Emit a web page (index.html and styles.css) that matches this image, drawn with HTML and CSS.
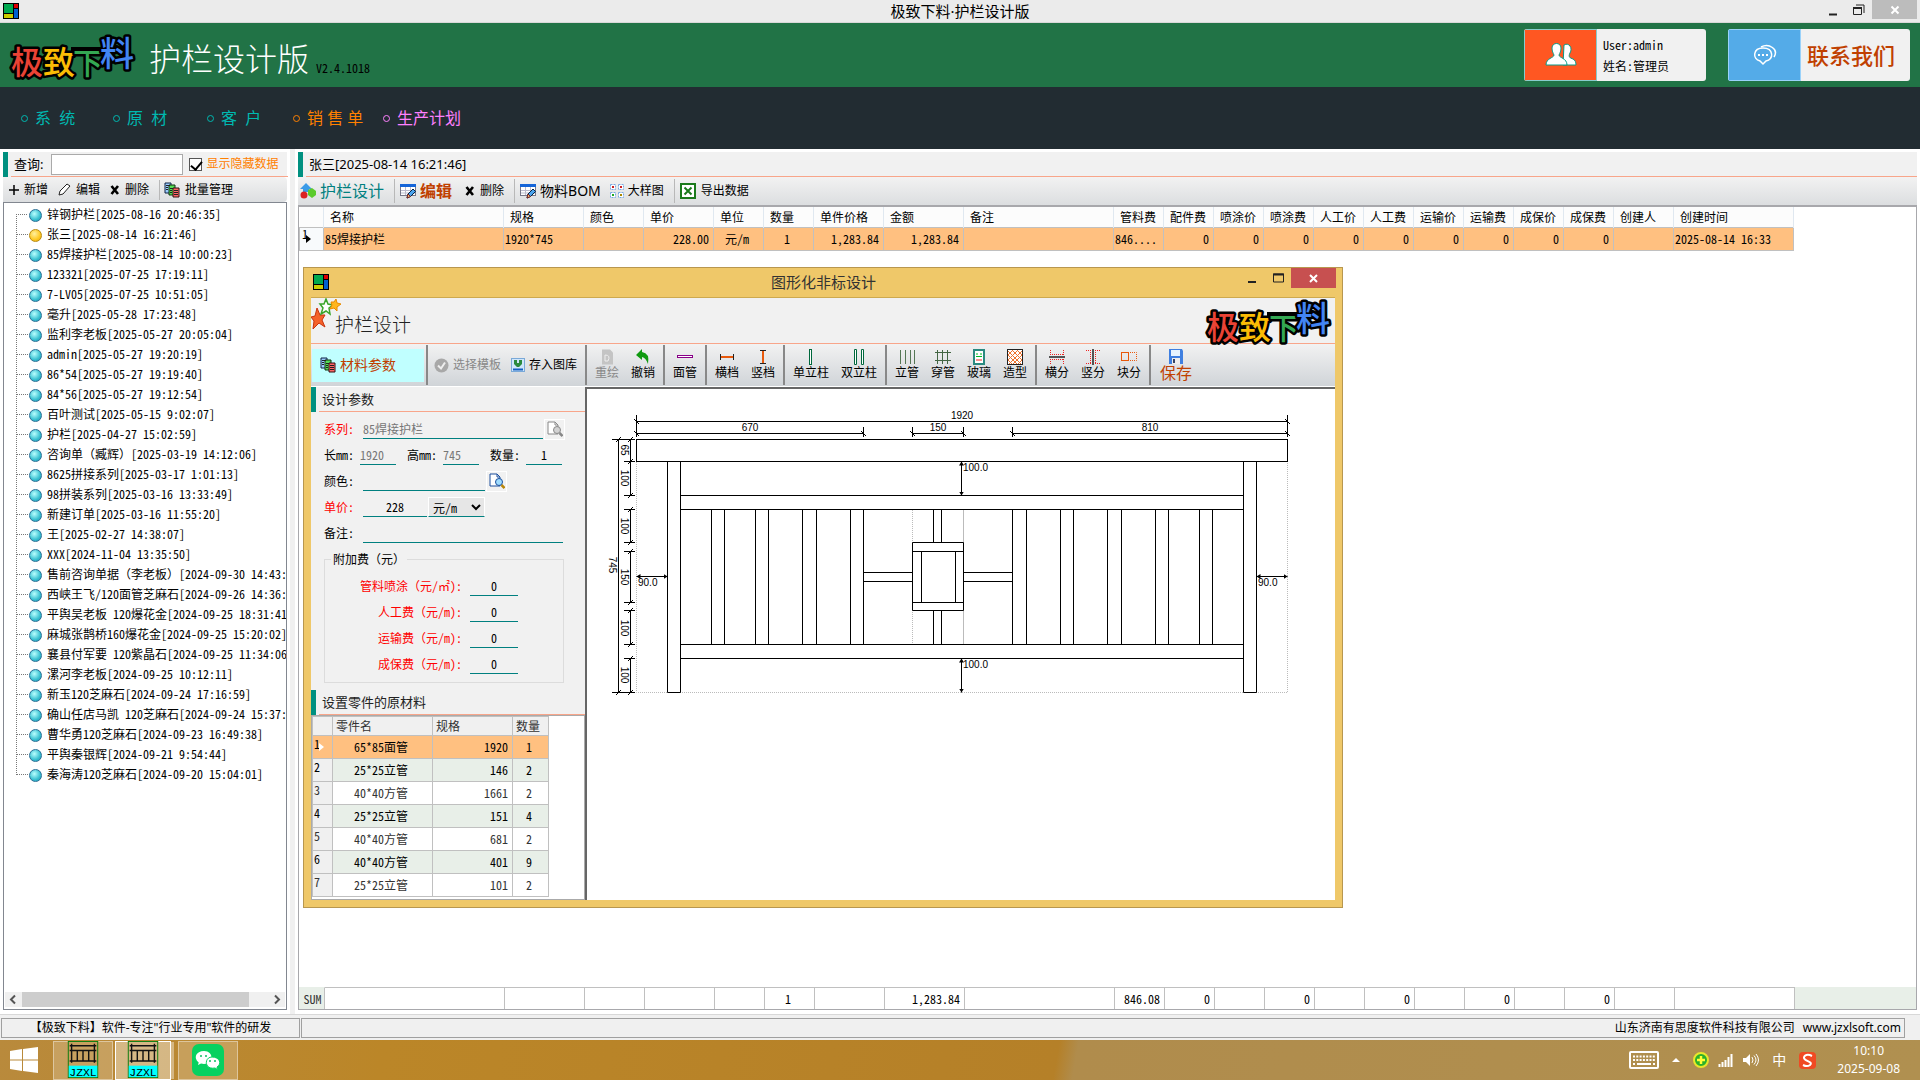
FILE: index.html
```html
<!DOCTYPE html>
<html lang="zh-CN">
<head>
    <meta charset="UTF-8">
    <meta name="viewport" content="width=device-width, initial-scale=1.0">
    <title>极致下料·护栏设计版</title>
    <link rel="stylesheet" href="styles.css">
</head>
<body>
    <svg class="defs" width="0" height="0">
        <symbol id="app" viewBox="0 0 16 16">
            <rect width="16" height="16" fill="#000"/>
            <rect x="1" y="1" width="9" height="9" fill="#00a84f"/>
            <rect x="11" y="1" width="4" height="4" fill="#d00"/>
            <rect x="11" y="6" width="4" height="9" fill="#0060d0"/>
            <rect x="1" y="11" width="9" height="4" fill="#cc0"/>
        </symbol>
        <symbol id="logo" viewBox="0 0 126 46" overflow="visible">
            <g font-family="Noto Sans CJK SC, sans-serif" font-weight="500" stroke="#000" stroke-width="5" stroke-linejoin="round" paint-order="stroke">
                <path d="M62 17H122" stroke-width="6"/>
                <text x="2" y="41" font-size="32" fill="#ea4335">极</text>
                <text x="34" y="41" font-size="32" fill="#fbbc05">致</text>
                <text x="64" y="41" font-size="30" fill="#34a853">下</text>
                <text x="91" y="33" font-size="34" fill="#4285f4">料</text>
            </g>
        </symbol>
        <symbol id="pages" viewBox="0 0 16 16">
            <path d="M1 1h6v10H1z" fill="#9cf" stroke="#124"/>
            <path d="M5 3h6v10H5z" fill="#5d5" stroke="#131"/>
            <path d="M9 6h6v9H9z" fill="#f66" stroke="#311"/>
            <path d="M2 3.500h4M2 5.500h2M2 7.500h2M6 6.500h3M6 8.500h2M6 10.500h2M10 8.500h4M10 10.500h4M10 12.500h4" stroke="#222"/>
        </symbol>
        <symbol id="formedit" viewBox="0 0 16 16">
            <rect x=".5" y="1.500" width="15" height="11" fill="#fff" stroke="#778"/>
            <rect y="1" width="16" height="3" fill="#1565d8"/>
            <path d="M1 7.500h14M1 10h14M5.500 4v8M10.500 4v8" stroke="#bbc"/>
            <path d="M7 15l1-4 5-5 2.500 2.500-5 5z" fill="#4aa3ee" stroke="#024"/>
            <path d="M7 15l1-4 2.500 2.500z" fill="#f7c27a" stroke="#722"/>
        </symbol>
        <symbol id="cross" viewBox="0 0 10 10">
            <path d="M1.500 1L8 9M8 1L1.500 9" stroke="#000" stroke-width="2.600"/>
        </symbol>
        <symbol id="find" viewBox="0 0 16 16">
            <path d="M1 1h7l3 3v9H1z" fill="#fff" stroke="currentColor"/>
            <path d="M8 1v3h3" fill="none" stroke="currentColor"/>
            <circle cx="10" cy="9" r="3.500" fill="#9fdcff" stroke="currentColor"/>
            <path d="M12.500 12l3 3" stroke="#b8860b" stroke-width="2.500"/>
        </symbol>
        <symbol id="fence" viewBox="0 0 32 40">
            <rect x=".5" y=".5" width="31" height="38" fill="none" stroke="#0a7a0a"/>
            <path d="M2 5h28M2 10h28M2 21h28M4 3v20M28 3v20M10 10v11M16 10v11M22 10v11" stroke="#111" stroke-width="1.500"/>
            <rect x="1" y="26" width="30" height="12" fill="#0ff"/>
            <text x="16" y="37" text-anchor="middle" font-family="Liberation Mono, monospace" font-size="12" fill="#000">JZXL</text>
        </symbol>
    </svg>

    <div class="titlebar">
        <svg class="icon16 title-icon"><use href="#app"/></svg>
        <span class="title-text">极致下料·护栏设计版</span>
        <div class="win-btns">
            <button aria-label="最小化"><svg width="10" height="14"><path d="M1 11.500h8" stroke="#222" stroke-width="2"/></svg></button>
            <button aria-label="还原"><svg width="12" height="12"><path d="M.5 3.500h8v7h-8zM3 1h8v8" fill="none" stroke="#222" stroke-width="1"/><path d="M0 4h9" stroke="#222" stroke-width="2"/></svg></button>
            <button class="close" aria-label="关闭"><svg width="10" height="10"><path d="M1.500 1.500l7 7M8.500 1.500l-7 7" stroke="#fff" stroke-width="2"/></svg></button>
        </div>
    </div>

    <header class="header">
        <svg class="logo"><use href="#logo"/></svg>
        <h1>护栏设计版</h1>
        <span class="version song">V2.4.1018</span>
        <div class="card user-card">
            <div class="card-icon orange">
                <svg width="32" height="26" viewBox="0 0 32 26"><path d="M19 3c5-3 9 3 6 8-2 4 0 5 3 6 2 1 3 3 3 6H18z" fill="#fff" stroke="#0a9a88"/><path d="M7 6c0-6 9-6 9 0 0 3-1 5-2 7 0 3 8 3 8 10H1c0-7 8-7 8-10-1-2-2-4-2-7z" fill="#fff" stroke="#0a9a88"/></svg>
            </div>
            <div class="card-text song"><span>User:admin</span><span>姓名:管理员</span></div>
        </div>
        <a href="#" class="card contact-card">
            <div class="card-icon blue">
                <svg width="24" height="22" viewBox="0 0 24 22"><path d="M10 4c11 0 11 12 3 13l-3 3-3-3C-1 15 0 4 10 4z" fill="none" stroke="#fff" stroke-width="1.500"/><path d="M8 3c8-4 18 2 13 10" fill="none" stroke="#fff" stroke-width="1.500"/><path d="M5 11h2M9 11h2M13 11h2" stroke="#fff" stroke-width="2"/></svg>
            </div>
            <span class="contact-text">联系我们</span>
        </a>
    </header>

    <nav class="nav">
        <a href="#"><i></i>系&nbsp;&nbsp;统</a>
        <a href="#"><i></i>原&nbsp;&nbsp;材</a>
        <a href="#"><i></i>客&nbsp;&nbsp;户</a>
        <a href="#" class="sale"><i></i>销 售 单</a>
        <a href="#" class="plan"><i></i>生产计划</a>
    </nav>

    <main class="main">
        <aside class="side">
            <div class="section">
                <div class="section-body">
                    <label for="query">查询:</label>
                    <input type="text" id="query" class="query">
                    <input type="checkbox" id="hidden-data" checked>
                    <label for="hidden-data" class="hidden-label">显示隐藏数据</label>
                </div>
            </div>
            <div class="toolbar side-toolbar">
                <button><svg width="10" height="10"><path d="M0 5h10M5 0v10" stroke="#000" stroke-width="1.500"/></svg>新增</button>
                <button><svg width="13" height="13"><path d="M1 12l1-4 7-7 3 2-7 8z" fill="#fff" stroke="#222"/></svg>编辑</button>
                <button><svg width="10" height="10"><use href="#cross"/></svg>删除</button>
                <span class="sep"></span>
                <button><svg class="icon16"><use href="#pages"/></svg>批量管理</button>
            </div>
            <div class="tree-box">
                <ul class="tree song">
                    <li>锌钢护栏[2025-08-16 20:46:35]</li>
                    <li class="current">张三[2025-08-14 16:21:46]</li>
                    <li>85焊接护栏[2025-08-14 10:00:23]</li>
                    <li>123321[2025-07-25 17:19:11]</li>
                    <li>7-LV05[2025-07-25 10:51:05]</li>
                    <li>毫升[2025-05-28 17:23:48]</li>
                    <li>监利李老板[2025-05-27 20:05:04]</li>
                    <li>admin[2025-05-27 19:20:19]</li>
                    <li>86*54[2025-05-27 19:19:40]</li>
                    <li>84*56[2025-05-27 19:12:54]</li>
                    <li>百叶测试[2025-05-15 9:02:07]</li>
                    <li>护栏[2025-04-27 15:02:59]</li>
                    <li>咨询单<span class="full">（臧辉）</span>[2025-03-19 14:12:06]</li>
                    <li>8625拼接系列[2025-03-17 1:01:13]</li>
                    <li>98拼装系列[2025-03-16 13:33:49]</li>
                    <li>新建订单[2025-03-16 11:55:20]</li>
                    <li>王[2025-02-27 14:38:07]</li>
                    <li>XXX[2024-11-04 13:35:50]</li>
                    <li>售前咨询单据<span class="full">（李老板）</span>[2024-09-30 14:43:</li>
                    <li>西峡王飞/120面管芝麻石[2024-09-26 14:36:</li>
                    <li>平舆吴老板 120爆花金[2024-09-25 18:31:41</li>
                    <li>麻城张鹊桥160爆花金[2024-09-25 15:20:02]</li>
                    <li>襄县付军要 120紫晶石[2024-09-25 11:34:06</li>
                    <li>漯河李老板[2024-09-25 10:12:11]</li>
                    <li>新玉120芝麻石[2024-09-24 17:16:59]</li>
                    <li>确山任店马凯 120芝麻石[2024-09-24 15:37:</li>
                    <li>曹华勇120芝麻石[2024-09-23 16:49:38]</li>
                    <li>平舆秦银辉[2024-09-21 9:54:44]</li>
                    <li>秦海涛120芝麻石[2024-09-20 15:04:01]</li>
                </ul>
                <div class="hscroll">
                    <svg width="17" height="15"><path d="M10 3.500l-4 4 4 4" fill="none" stroke="#555" stroke-width="2"/></svg>
                    <div class="thumb"></div>
                    <svg width="17" height="15"><path d="M7 3.500l4 4-4 4" fill="none" stroke="#555" stroke-width="2"/></svg>
                </div>
            </div>
        </aside>

        <div class="splitter"></div>

        <section class="content">
            <div class="section">
                <div class="section-body">张三[2025-08-14 16:21:46]</div>
            </div>
            <div class="toolbar main-toolbar">
                <button class="big teal"><svg class="icon16" viewBox="0 0 16 16"><path d="M6 0l6 6H9v3H3V6H0z" fill="#3a9be8"/><circle cx="4" cy="12" r="3.500" fill="#d22"/><path d="M8 7l4-2 4 3v4l-4 3-4-3z" fill="#5ccb2c"/></svg>护栏设计</button>
                <span class="sep"></span>
                <button class="big rust"><svg class="icon16"><use href="#formedit"/></svg>编辑</button>
                <button class="del"><svg width="10" height="10"><use href="#cross"/></svg>删除</button>
                <span class="sep"></span>
                <button class="mid"><svg class="icon16"><use href="#formedit"/></svg>物料BOM</button>
                <button class="sample"><svg width="14" height="14"><path d="M.5.5h5v5h-5zM8.500.5h5v5h-5zM.5 8.500h5v5h-5zM8.500 8.500h5v5h-5z" fill="#fff" stroke="#79a8e0" stroke-dasharray="2 1"/><path d="M2 3h2M10 3h2" stroke="#c22" stroke-width="2"/><path d="M2 11h2" stroke="#2a2" stroke-width="2"/><path d="M10 11h2" stroke="#a80" stroke-width="2"/></svg>大样图</button>
                <span class="sep"></span>
                <button><svg class="icon16" viewBox="0 0 16 16"><rect x="1" y="1" width="14" height="14" fill="#fff" stroke="#1b7a1b" stroke-width="2"/><path d="M4.500 4.500l7 7M11.500 4.500l-7 7" stroke="#1b7a1b" stroke-width="2"/></svg>导出数据</button>
            </div>
            <div class="grid-box">
                <table class="grid song">
                    <colgroup>
                        <col class="w24"><col class="w180"><col class="w80"><col class="w60"><col class="w70"><col class="w50"><col class="w50"><col class="w70"><col class="w80"><col class="w150">
                        <col class="w50"><col class="w50"><col class="w50"><col class="w50"><col class="w50"><col class="w50"><col class="w50"><col class="w50"><col class="w50"><col class="w50"><col class="w60"><col class="w120">
                    </colgroup>
                    <thead>
                        <tr><th></th><th>名称</th><th>规格</th><th>颜色</th><th>单价</th><th>单位</th><th>数量</th><th>单件价格</th><th>金额</th><th>备注</th><th>管料费</th><th>配件费</th><th>喷涂价</th><th>喷涂费</th><th>人工价</th><th>人工费</th><th>运输价</th><th>运输费</th><th>成保价</th><th>成保费</th><th>创建人</th><th>创建时间</th></tr>
                    </thead>
                    <tbody>
                        <tr><td class="rownum">1<b></b></td><td>85焊接护栏</td><td>1920*745</td><td></td><td class="r">228.00</td><td class="c">元/m</td><td class="c">1</td><td class="r">1,283.84</td><td class="r">1,283.84</td><td></td><td>846....</td><td class="r">0</td><td class="r">0</td><td class="r">0</td><td class="r">0</td><td class="r">0</td><td class="r">0</td><td class="r">0</td><td class="r">0</td><td class="r">0</td><td></td><td>2025-08-14 16:33</td></tr>
                    </tbody>
                </table>
                <div class="sum-bar">
                    <table class="grid sum song">
                        <colgroup>
                            <col class="w24"><col class="w180"><col class="w80"><col class="w60"><col class="w70"><col class="w50"><col class="w50"><col class="w70"><col class="w80"><col class="w150">
                            <col class="w50"><col class="w50"><col class="w50"><col class="w50"><col class="w50"><col class="w50"><col class="w50"><col class="w50"><col class="w50"><col class="w50"><col class="w60"><col class="w120">
                        </colgroup>
                        <tbody>
                            <tr><td class="sum-label">SUM</td><td></td><td></td><td></td><td></td><td></td><td class="c">1</td><td></td><td class="r">1,283.84</td><td></td><td class="r">846.08</td><td class="r">0</td><td></td><td class="r">0</td><td></td><td class="r">0</td><td></td><td class="r">0</td><td></td><td class="r">0</td><td></td><td></td></tr>
                        </tbody>
                    </table>
                </div>
            </div>
        </section>
    </main>

    <div class="statusbar">
        <div class="status-left">【极致下料】软件-专注"行业专用"软件的研发</div>
        <div class="status-right"><span>山东济南有思度软件科技有限公司</span><span>www.jzxlsoft.com</span></div>
    </div>

    <footer class="taskbar">
        <button class="start" aria-label="开始"><svg width="28" height="26" viewBox="0 0 28 26"><path d="M0 4l12-2v10.500H0zM13 2l15-2v12.500H13zM0 13.500h12V24L0 22zM13 13.500h15V26l-15-2z" fill="#fff"/></svg></button>
        <button class="task" aria-label="JZXL"><svg width="32" height="38"><use href="#fence"/></svg></button>
        <button class="task active" aria-label="JZXL 护栏设计"><svg width="32" height="38"><use href="#fence"/></svg></button>
        <button class="task" aria-label="微信"><svg width="32" height="32" viewBox="0 0 32 32"><rect width="32" height="32" rx="7" fill="#07d160"/><path d="M12 7c10 0 10 13 0 13-1 0-2 0-3-.4L6 21l.7-2.500C1 14 4 7 12 7z" fill="#fff"/><path d="M20 13c8 0 10 7 5 10l.5 2.500L23 24c-11 2-11-11-3-11z" fill="#fff" stroke="#07d160"/><circle cx="9" cy="12" r="1" fill="#07c160"/><circle cx="14" cy="12" r="1" fill="#07c160"/><circle cx="18" cy="17" r="1" fill="#07c160"/><circle cx="23" cy="17" r="1" fill="#07c160"/></svg></button>
        <div class="tray">
            <svg class="keyboard" width="30" height="20" viewBox="0 0 30 20"><rect x="1" y="2" width="28" height="16" rx="1" fill="none" stroke="#fff" stroke-width="2"/><path d="M4 6.500h22M4 10h22" stroke="#fff" stroke-width="2" stroke-dasharray="2 1.300"/><path d="M8 14h14M4 14h2M24 14h2" stroke="#fff" stroke-width="2"/></svg>
            <svg class="more" width="8" height="6"><path d="M0 5l4-4 4 4z" fill="#fff"/></svg>
            <svg width="16" height="16"><circle cx="8" cy="8" r="7" fill="#2bb02b" stroke="#e8e82a" stroke-width="2"/><path d="M8 4v8M4 8h8" stroke="#ff3" stroke-width="2.500"/></svg>
            <svg width="16" height="14"><path d="M1.500 14v-3M4.500 14V9M7.500 14V7M10.500 14V4M13.500 14V1" stroke="#fff" stroke-width="2"/></svg>
            <svg width="16" height="14" viewBox="0 0 16 14"><path d="M0 5h3l4-4v12L3 9H0z" fill="#fff"/><path d="M9 4q2 3 0 6M11 2.500q4 4.500 0 9M13 1q5 6 0 12" fill="none" stroke="#fff"/></svg>
            <span class="ime">中</span>
            <svg width="17" height="17"><rect width="17" height="17" rx="4" fill="#f04a23"/><path d="M13 4C7 1 3 5 6 7.500S14 10 11 13c-2 1.500-5 1-7 0" fill="none" stroke="#fff" stroke-width="2"/></svg>
            <div class="clock"><span>10:10</span><span>2025-09-08</span></div>
        </div>
    </footer>

    <!-- 图形化非标设计窗口 -->
    <div class="dialog" role="dialog" aria-label="图形化非标设计">
        <div class="dialog-title">
            <svg class="icon16 title-icon"><use href="#app"/></svg>
            <span class="title-text">图形化非标设计</span>
            <div class="win-btns">
                <button aria-label="最小化"><svg width="10" height="14"><path d="M1 11h8" stroke="#222" stroke-width="2"/></svg></button>
                <button aria-label="最大化"><svg width="11" height="10"><path d="M.5 1h10v8H.5z" fill="none" stroke="#222"/><path d="M0 1.500h11" stroke="#222" stroke-width="2"/></svg></button>
                <button class="close" aria-label="关闭"><svg width="9" height="9"><path d="M1 1l7 7M8 1L1 8" stroke="#fff" stroke-width="2"/></svg></button>
            </div>
        </div>
        <div class="dialog-body">
            <div class="dialog-head">
                <svg class="stars" width="30" height="32" viewBox="0 0 30 32"><path d="M6 10l3 7 5 0-3 5 3 7-6-4-6 6 1-8-3-4 4-1z" fill="#f5622a" stroke="#c8330c"/><path d="M15 1l2 5 5 1-4 3 1 6-4-3-5 3 2-6-3-4h4z" fill="#fff" stroke="#3aa52a" stroke-width="1.500"/><path d="M25 1l1 4 4 1-4 3v4l-3-3-4 1 2-4-1-3h3z" fill="#ffb61e" stroke="#e88a00"/></svg>
                <h2>护栏设计</h2>
                <svg class="logo"><use href="#logo"/></svg>
            </div>
            <div class="ribbon">
                <button class="params"><svg class="icon16"><use href="#pages"/></svg>材料参数</button>
                <span class="rsep"></span>
                <button class="flat" disabled><svg width="15" height="15"><circle cx="7.500" cy="7.500" r="7" fill="#a8a8a8"/><path d="M4 7.500l3 3 4-6" fill="none" stroke="#eee" stroke-width="2"/></svg>选择模板</button>
                <button class="flat"><svg width="14" height="14"><rect x=".5" y=".5" width="13" height="13" fill="#cfe6fb" stroke="#7aa9d8"/><path d="M3 2h3v3h2V2h3v4l-3 3H6L3 6z" fill="#2b8a3e"/><path d="M2 11.500h10" stroke="#1560c0" stroke-width="2"/></svg>存入图库</button>
                <span class="rsep"></span>
                <button class="tool" disabled><svg class="icon16"><path d="M4 .5h7l3 3v12H3V.5z" fill="#c4c4c4"/><path d="M6 6v6M6 6q6 0 3 6H6" fill="none" stroke="#eee"/></svg>重绘</button>
                <button class="tool"><svg class="icon16"><path d="M7 0v3q8 1 6 12-2-6-6-7v3L1 6z" fill="#109a10"/></svg>撤销</button>
                <span class="rsep"></span>
                <button class="tool"><svg class="icon16"><rect x=".5" y="6.500" width="15" height="2" fill="#fff" stroke="#808"/></svg>面管</button>
                <span class="rsep"></span>
                <button class="tool"><svg class="icon16"><path d="M1.500 5v6M14.500 5v6" stroke="#222"/><path d="M2 8h12" stroke="#e8590c" stroke-width="2"/></svg>横档</button>
                <button class="tool"><svg class="icon16"><path d="M5 1.500h6M5 14.500h6" stroke="#222"/><path d="M8 2v12" stroke="#e8590c" stroke-width="2"/></svg>竖档</button>
                <span class="rsep"></span>
                <button class="tool wide"><svg class="icon16"><rect x="6.500" y=".5" width="2" height="15" fill="#fff" stroke="#00683c"/></svg>单立柱</button>
                <button class="tool wide"><svg class="icon16"><path d="M3.500.5h2v15h-2zM10.500.5h2v15h-2z" fill="#fff" stroke="#00683c"/></svg>双立柱</button>
                <span class="rsep"></span>
                <button class="tool"><svg class="icon16"><path d="M1.500 1v14M6.500 1v14M11.500 1v14M15.500 1v14" stroke="#575"/></svg>立管</button>
                <button class="tool"><svg class="icon16"><path d="M2.500 1v14M7.500 1v14M12.500 1v14M0 3.500h16M0 11.500h16" stroke="#464"/></svg>穿管</button>
                <button class="tool"><svg class="icon16"><rect x="3" y="1" width="10" height="14" fill="#fff" stroke="#2a8a80" stroke-width="2"/><path d="M5 5h2M9 5h2M5 7.500h6" stroke="#0b2"/><path d="M5 11h6" stroke="#e22"/></svg>玻璃</button>
                <button class="tool"><svg class="icon16"><rect x=".5" y=".5" width="15" height="15" fill="#fff" stroke="#222"/><path d="M1 6l5-5M1 11L11 1M2 15L15 2M6 15l9-9M11 15l4-4M10 1l5 5M5 1l10 10M1 2l13 13M1 6l9 9M1 11l4 4" stroke="#f0742c"/></svg>造型</button>
                <span class="rsep"></span>
                <button class="tool"><svg class="icon16"><path d="M1.500 1v5M14.500 1v5M1 5.500h14M1 10.500h14M1.500 10v5M14.500 10v5" stroke="#e22" stroke-dasharray="1 1"/><path d="M0 8h16" stroke="#222" stroke-width="1.500"/></svg>横分</button>
                <button class="tool"><svg class="icon16"><path d="M1 1.500h5M1 14.500h5M5.500 1v14M10.500 1v14M10 1.500h5M10 14.500h5" stroke="#e22" stroke-dasharray="1 1"/><path d="M8 0v16" stroke="#222" stroke-width="1.500"/></svg>竖分</button>
                <button class="tool"><svg class="icon16"><rect x=".5" y="3.500" width="7" height="8" fill="none" stroke="#e8590c"/><path d="M9 3.500h6.500v8H9" fill="none" stroke="#e8590c" stroke-dasharray="1 1"/></svg>块分</button>
                <span class="rsep"></span>
                <button class="tool save"><svg class="icon16"><path d="M1 0h13l1 2v13H1z" fill="#3f7fe0"/><rect x="3" y="1" width="9" height="6" fill="#e8f4ff"/><rect x="4" y="9" width="8" height="6" fill="#eee"/><rect x="5" y="10" width="2" height="4" fill="#346"/></svg>保存</button>
            </div>
            <div class="work">
                <div class="form-side">
                    <div class="section"><div class="section-body">设计参数</div></div>
                    <form class="params-form song">
                        <div class="row"><label for="series" class="red lab">系列:</label><input id="series" class="line w180" value="85焊接护栏" disabled><button type="button" class="find off" aria-label="选择系列"><svg class="icon16"><use href="#find"/></svg></button></div>
                        <div class="row dims"><label for="len">长mm:</label><input id="len" class="line w36" value="1920" disabled><label for="hei">高mm:</label><input id="hei" class="line w36" value="745" disabled><label for="qty">数量:</label><input id="qty" class="line w36 mid-text" value="1"></div>
                        <div class="row"><label for="color" class="lab">颜色:</label><input id="color" class="line w122"><button type="button" class="find" aria-label="选择颜色"><svg class="icon16"><use href="#find"/></svg></button></div>
                        <div class="row"><label for="price" class="red lab">单价:</label><input id="price" class="line w64 mid-text" value="228"><select aria-label="单位"><option>元/m</option></select></div>
                        <div class="row"><label for="remark" class="lab">备注:</label><input id="remark" class="line w200"></div>
                        <fieldset>
                            <legend class="full">附加费（元）</legend>
                            <div class="fee"><label for="fee1">管料喷涂<span class="full">（</span>元/㎡）:</label><input id="fee1" class="line w48 mid-text" value="0"></div>
                            <div class="fee"><label for="fee2">人工费<span class="full">（</span>元/m）:</label><input id="fee2" class="line w48 mid-text" value="0"></div>
                            <div class="fee"><label for="fee3">运输费<span class="full">（</span>元/m）:</label><input id="fee3" class="line w48 mid-text" value="0"></div>
                            <div class="fee"><label for="fee4">成保费<span class="full">（</span>元/m）:</label><input id="fee4" class="line w48 mid-text" value="0"></div>
                        </fieldset>
                    </form>
                    <div class="section"><div class="section-body">设置零件的原材料</div></div>
                    <div class="parts-box">
                        <table class="parts song">
                            <colgroup><col class="w20"><col class="w100"><col class="w80"><col class="w36"></colgroup>
                            <thead><tr><th></th><th>零件名</th><th>规格</th><th>数量</th></tr></thead>
                            <tbody>
                                <tr class="selected"><td class="rownum">1<b></b></td><td class="c">65*85面管</td><td class="r">1920</td><td class="c">1</td></tr>
                                <tr class="even"><td class="rownum">2</td><td class="c">25*25立管</td><td class="r">146</td><td class="c">2</td></tr>
                                <tr><td class="rownum">3</td><td class="c">40*40方管</td><td class="r">1661</td><td class="c">2</td></tr>
                                <tr class="even"><td class="rownum">4</td><td class="c">25*25立管</td><td class="r">151</td><td class="c">4</td></tr>
                                <tr><td class="rownum">5</td><td class="c">40*40方管</td><td class="r">681</td><td class="c">2</td></tr>
                                <tr class="even"><td class="rownum">6</td><td class="c">40*40方管</td><td class="r">401</td><td class="c">9</td></tr>
                                <tr><td class="rownum">7</td><td class="c">25*25立管</td><td class="r">101</td><td class="c">2</td></tr>
                            </tbody>
                        </table>
                    </div>
                </div>
                <div class="canvas">
                    <svg class="drawing" width="748" height="320">
                        <defs>
                            <marker id="tick" viewBox="-3 -3 6 6" markerWidth="6" markerHeight="6" orient="auto"><path d="M-2.500-2.500l5 5" stroke="#000"/></marker>
                            <marker id="arrow" viewBox="-4 -3 8 6" markerWidth="8" markerHeight="6" orient="auto-start-reverse"><path d="M-4-2.500L0 0l-4 2.500z"/></marker>
                        </defs>
                        <g transform="translate(13 1)" fill="none" stroke="#000">
                            <!-- 辅助线 -->
                            <path d="M36.500 72V302.500H687.500V72M312.500 120V254" stroke="#bbb" stroke-dasharray="1 1"/>
                            <path d="M363.500 120V254" stroke="#bbb"/>
                            <!-- 面管、立柱、横档 -->
                            <rect x="36.500" y="49.500" width="651" height="22"/>
                            <path d="M67.500 71.500V302.500H80.500V71.500M643.500 71.500V302.500H656.500V71.500"/>
                            <path d="M80.500 105.500H643.500M80.500 119.500H643.500M80.500 254.500H643.500M80.500 268.500H643.500"/>
                            <!-- 立管 -->
                            <path d="M111.500 119.500v135M124.500 119.500v135M155.500 119.500v135M168.500 119.500v135M202.500 119.500v135M216.500 119.500v135M250.500 119.500v135M263.500 119.500v135"/>
                            <path d="M412.500 119.500v135M426.500 119.500v135M460.500 119.500v135M473.500 119.500v135M507.500 119.500v135M521.500 119.500v135M555.500 119.500v135M568.500 119.500v135M599.500 119.500v135M612.500 119.500v135"/>
                            <!-- 造型 -->
                            <path d="M333.500 119.500v33M341.500 119.500v33M333.500 220.500v34M341.500 220.500v34M263.500 182.500h49M263.500 191.500h49M363.500 182.500h49M363.500 191.500h49"/>
                            <path d="M312.500 152.500h51v68h-51zM312.500 161.500h51M312.500 212.500h51M321.500 161.500v51M355.500 161.500v51"/>
                            <!-- 尺寸线 -->
                            <path d="M36.500 25v22M687.500 25v22M263.500 37v10M312.500 37v10M363.500 37v10M412.500 37v10M12 49.500h23M12 302.500h23M24 71.500h11M24 105.500h11M24 119.500h11M24 152.500h11M24 161.500h11M24 212.500h11M24 220.500h11M24 254.500h11M24 268.500h11"/>
                            <g marker-start="url(#tick)" marker-end="url(#tick)">
                                <path d="M36.500 31.500H687.500"/>
                                <path d="M36.500 43.500H263.500"/><path d="M312.500 43.500H363.500"/><path d="M412.500 43.500H687.500"/>
                                <path d="M18.500 49.500V302.500"/><path d="M30.500 49.500V71.500"/><path d="M30.500 71.500V105.500"/><path d="M30.500 119.500V152.500"/><path d="M30.500 161.500V212.500"/><path d="M30.500 220.500V254.500"/><path d="M30.500 268.500V302.500"/>
                            </g>
                            <g marker-start="url(#arrow)" marker-end="url(#arrow)">
                                <path d="M361.500 71.500V105.500"/><path d="M361.500 268.500V302.500"/><path d="M36.500 186.500H67.500"/><path d="M656.500 186.500H687.500"/>
                            </g>
                        </g>
                        <g transform="translate(13 1)" class="dim-text">
                            <g text-anchor="middle">
                                <text x="362" y="29">1920</text><text x="150" y="41">670</text><text x="338" y="41">150</text><text x="550" y="41">810</text>
                                <text transform="translate(21 60) rotate(90)">65</text>
                                <text transform="translate(21 88) rotate(90)">100</text>
                                <text transform="translate(21 136) rotate(90)">100</text>
                                <text transform="translate(21 187) rotate(90)">150</text>
                                <text transform="translate(21 238) rotate(90)">100</text>
                                <text transform="translate(21 285) rotate(90)">100</text>
                                <text transform="translate(9 175) rotate(90)">745</text>
                            </g>
                            <text x="363" y="81">100.0</text><text x="363" y="278">100.0</text><text x="38" y="196">90.0</text><text x="658" y="196">90.0</text>
                        </g>
                    </svg>
                </div>
            </div>
        </div>
    </div>
</body>
</html>
```
FILE: styles.css
```css
:root {
    --green: #217346;
    --teal: #009080;
    --salmon: #f8a58a;
    --panel: #f1f1f1;
    --selected: #ffc080;
    --line: #c0c0c0;
    --rust: #c04000;
    --gold: #efc869;
}
* { box-sizing: border-box; }
body {
    margin: 0;
    height: 100vh;
    display: flex;
    flex-direction: column;
    overflow: hidden;
    background: #fff;
    color: #000;
    font-family: "Noto Sans", "Noto Sans CJK SC", sans-serif;
    font-size: 12px;
    line-height: 16px;
}
button, input, select { font: inherit; color: inherit; }
button { border: 0; padding: 0; background: none; }
a { text-decoration: none; color: inherit; }
svg { flex: none; display: block; }
.defs { position: absolute; }
.icon16 { width: 16px; height: 16px; }
/* half-width latin, every ascii character is half of a han one */
.song { font-family: "Noto Sans CJK SC", sans-serif; font-feature-settings: "hwid"; }
.full { font-feature-settings: normal; }

/* title bar */
.titlebar {
    display: grid;
    grid-template-columns: 1fr auto 1fr;
    height: 23px;
    padding: 0 3px;
    background: #ebebeb;
    border-bottom: 1px solid #d8d8d8;
}
.titlebar .title-icon { margin-top: 3px; }
.titlebar .title-text { font-size: 15px; line-height: 22px; }
.win-btns { display: flex; justify-content: flex-end; align-items: flex-start; }
.win-btns button { width: 26px; height: 19px; display: flex; align-items: center; justify-content: center; }
.win-btns .close { width: 45px; background: #bcbcbc; }

/* green header */
.header {
    display: flex;
    height: 64px;
    padding: 0 10px 0 9px;
    background: var(--green);
}
.logo { width: 126px; height: 46px; overflow: visible; }
.header .logo { margin-top: 10px; }
h1 { margin: 12px 0 0 14px; font-size: 32px; line-height: 48px; font-weight: 300; color: #fff; }
.version { margin: 37px auto 0 7px; }
.card { display: flex; width: 182px; height: 52px; margin-top: 6px; border-radius: 3px; overflow: hidden; background: var(--panel); }
.card-icon { width: 73px; display: flex; align-items: center; justify-content: center; border: 1px solid #8cc; }
.orange { background: #ff5722; }
.blue { background: #54abe8; border-color: #9ad2fa; }
.card-text { display: flex; flex-direction: column; justify-content: center; gap: 5px; padding-left: 6px; }
.contact-card { margin-left: 22px; }
.contact-text { padding-left: 6px; font-size: 22px; line-height: 52px; color: var(--rust); font-weight: 500; }

/* menu */
.nav {
    display: grid;
    grid-template-columns: 92px 94px 86px 90px auto;
    align-items: center;
    height: 62px;
    padding-left: 21px;
    background: #222c32;
    font-size: 16px;
    color: #00b8b0;
}
.nav a { display: flex; align-items: center; gap: 7px; }
.nav i { width: 7px; height: 7px; border: 1px solid; border-radius: 50%; }
.nav .sale { color: #ff8000; }
.nav .plan { color: #ff80ff; }

/* main area */
.main { flex: 1; display: flex; min-height: 0; padding: 3px 3px 4px; }
.side { width: 284px; display: flex; flex-direction: column; }
.splitter { width: 5px; margin: -3px 3px -4px; background: #f0f0f0; }
.content { flex: 1; min-width: 0; display: flex; flex-direction: column; }

.section { display: flex; height: 25px; border-left: 5px solid var(--teal); background: var(--panel); }
.section-body { flex: 1; display: flex; align-items: center; margin-left: 3px; padding-left: 3px; border-bottom: 1px solid var(--salmon); font-size: 13px; }
.side .section-body { margin-right: -1px; }
.query { width: 132px; height: 21px; margin: 0 6px 0 8px; border: 1px solid #aaa; }
.section-body input[type=checkbox] {
    appearance: none;
    position: relative;
    width: 13px;
    height: 13px;
    margin: 0 4px 0 0;
    border: 1px solid #555;
    background: #fff;
}
.section-body input[type=checkbox]:checked::after {
    content: "";
    position: absolute;
    left: 3px;
    top: 0;
    width: 5px;
    height: 9px;
    border: solid #000;
    border-width: 0 2px 2px 0;
    transform: rotate(40deg);
}
.hidden-label { font-size: 12px; color: #ff8000; }

.toolbar { display: flex; align-items: center; background: linear-gradient(#f2f2f2, #dcdee0); }
.toolbar button { display: flex; align-items: center; gap: 5px; white-space: nowrap; }
.sep { width: 1px; height: 20px; background: #b8b8b8; }
.side-toolbar { height: 25px; padding-left: 6px; gap: 10px; border-radius: 0 4px 4px 0; }
.side-toolbar .sep { margin-right: -6px; }
.main-toolbar { height: 28px; padding-left: 2px; gap: 5px; }
.main-toolbar .sep { height: 24px; margin-left: 5px; }
.main-toolbar .big { gap: 4px; font-size: 16px; }
.main-toolbar .mid { gap: 4px; font-size: 14px; }
.main-toolbar .del { margin-left: 8px; }
.main-toolbar .sample { gap: 4px; margin-left: 4px; }
.teal { color: #008080; }
.rust { color: var(--rust); font-weight: 700; }

/* orders tree */
.tree-box { flex: 1; display: flex; flex-direction: column; min-height: 0; border: 1px solid #828790; overflow: hidden; }
.tree { flex: 1; margin: 0; padding: 1px 0 0 12px; list-style: none; }
.tree li {
    position: relative;
    height: 20px;
    padding-left: 31px;
    line-height: 20px;
    white-space: nowrap;
}
/* connector lines */
.tree li::before {
    content: "";
    position: absolute;
    left: 0;
    top: -10px;
    width: 11px;
    height: 20px;
    border-left: 1px dotted #777;
    border-bottom: 1px dotted #777;
}
.tree li:first-child::before { height: 1px; top: 9px; border-left: 0; }
.tree li::after {
    content: "";
    position: absolute;
    left: 13px;
    top: 5px;
    width: 11px;
    height: 11px;
    border-radius: 50%;
    border: 1px solid #2a6f96;
    background: radial-gradient(circle at 40% 35%, #b8ffff, #38c0d0 60%, #2090b0);
}
.tree .current::after { border-color: #b88a10; background: radial-gradient(circle at 40% 35%, #fff0a0, #ffc820 60%, #e0a010); }
.hscroll { display: flex; height: 15px; margin: 0 1px 2px; background: #f0f0f0; }
.thumb { width: 227px; margin-right: auto; background: #cdcdcd; }

/* order grid */
.grid-box { flex: 1; display: flex; flex-direction: column; justify-content: space-between; border: 1px solid #a8a8ac; border-top-width: 2px; }
.grid { table-layout: fixed; width: 1494px; border-collapse: collapse; }
.w20 { width: 20px; }
.w24 { width: 24px; }
.w36 { width: 36px; }
.w48 { width: 48px; }
.w50 { width: 50px; }
.w60 { width: 60px; }
.w64 { width: 64px; }
.w70 { width: 70px; }
.w80 { width: 80px; }
.w100 { width: 100px; }
.w120 { width: 120px; }
.w122 { width: 122px; }
.w150 { width: 150px; }
.w180 { width: 180px; }
.w200 { width: 200px; }
.grid th {
    height: 20px;
    padding: 0 0 0 6px;
    border-right: 1px solid #e0e8f0;
    background: #fcfcfc;
    text-align: left;
    font-weight: 400;
    white-space: nowrap;
}
.grid td { height: 23px; padding: 0 4px 0 1px; border: 1px solid var(--line); background: var(--selected); white-space: nowrap; }
.grid .c, .parts .c { text-align: center; }
.grid .r, .parts .r { text-align: right; }
.grid .rownum { position: relative; padding: 0 0 0 2px; background: #f8fafc; line-height: 12px; vertical-align: top; }
.rownum b { position: absolute; left: 6px; top: 7px; border: solid transparent; border-width: 4px 0 4px 5px; border-left-color: #000; }
.sum-bar { padding-left: 2px; background: #e8efe8; }
.grid.sum { border-collapse: separate; border-spacing: 0; }
.sum td { height: 22px; background: #fff; border-width: 1px 1px 0 0; }
.sum .sum-label { padding: 0; background: #e8efe8; border-top-color: #e8efe8; color: #333; text-align: center; }

/* status bar */
.statusbar { display: flex; gap: 1px; height: 26px; padding: 3px 1px 2px; background: #f0f0f0; border-top: 1px solid #d8d8d8; }
.statusbar > div { border: 1px solid #a0a0a0; line-height: 18px; }
.status-left { width: 299px; text-align: center; }
.status-right { flex: 1; display: flex; justify-content: flex-end; gap: 8px; margin-right: 14px; padding-right: 3px; }

/* taskbar */
.taskbar { display: flex; align-items: center; height: 40px; background: linear-gradient(100deg, #b98a3c, #bb8628 20%, #b58028 55%, #b08c4c 56%, #b09050); color: #fff; }
.start { margin: 0 15px 0 10px; }
.task { width: 60px; height: 39px; display: flex; align-items: center; justify-content: center; background: rgba(255, 255, 255, .2); border: 1px solid rgba(255, 255, 255, .4); }
.task.active { width: 56px; margin: 0 7px 0 2px; background: rgba(255, 255, 255, .4); border-color: #fff; box-shadow: 4px 0 0 -1px rgba(255, 255, 255, .4); }
.tray { display: flex; align-items: center; gap: 9px; margin-left: auto; padding-right: 20px; }
.keyboard, .more { margin-right: 4px; }
.ime { margin: 0 4px; font-size: 14px; }
.clock { display: flex; flex-direction: column; align-items: center; margin-left: 12px; line-height: 18px; }

/* dialog window */
.dialog {
    position: absolute;
    left: 303px;
    top: 267px;
    width: 1040px;
    padding: 0 7px 7px;
    border: 1px solid #b8974f;
    background: var(--gold);
}
.dialog-title { display: grid; grid-template-columns: 1fr auto 1fr; height: 29px; margin-right: -1px; }
.dialog-title .title-icon { margin: 6px 0 0 2px; }
.dialog-title .title-text { font-size: 15px; line-height: 29px; color: #333; }
.dialog-title .win-btns .close { height: 20px; background: #c75050; }
.dialog-body { border: 1px solid #cda94f; border-width: 1px 0 0; background: var(--panel); }
.dialog-head { display: flex; height: 46px; padding-right: 4px; border-bottom: 1px solid var(--salmon); }
.dialog-head h2 { margin: 13px auto 0 -6px; font-size: 19px; line-height: 28px; font-weight: 300; color: #222; }

.ribbon { display: flex; align-items: center; height: 42px; padding-left: 1px; background: linear-gradient(#f2f2f2, #d0d4d8); }
.ribbon button { display: flex; align-items: center; white-space: nowrap; }
.ribbon button:disabled { color: #888; }
.ribbon .params { width: 112px; height: 33px; gap: 4px; padding-left: 8px; background: #c0ffff; font-size: 14px; color: var(--rust); }
.rsep { width: 2px; height: 40px; margin: 0 2px; background: #888; }
.params + .rsep { margin-right: 6px; }
.ribbon .flat { gap: 4px; margin-right: 6px; }
.ribbon .flat + .flat { margin-left: 4px; }
.ribbon .tool { width: 36px; flex-direction: column; }
.ribbon .tool.wide { width: 48px; }
.ribbon .save { width: 46px; font-size: 16px; color: var(--rust); }

.work { display: flex; border-top: 1px solid #fff; }
.form-side { width: 274px; }
.form-side .section-body { color: #222; }
.params-form { height: 278px; padding: 4px 0 0 13px; }
.row { display: flex; align-items: center; height: 26px; }
.lab { width: 39px; }
.red, .fee label { color: #f00; }
.line { height: 20px; padding: 0; border: 0; border-bottom: 1px solid #008080; border-radius: 0; background: none; }
.line:disabled { color: #777; }
.mid-text { text-align: center; }
.dims label { width: 36px; }
.dims .line { margin-right: 11px; }
.find { width: 21px; height: 21px; margin-left: 1px; display: flex; align-items: center; justify-content: center; border: 1px solid #fff; color: #1c4f9c; }
.find.off { color: #888; filter: grayscale(1); }
select { width: 57px; height: 20px; margin-left: 1px; border: 1px solid #fff; border-bottom-color: #008080; background: #e6e6e6; }
fieldset { width: 240px; height: 132px; margin: 5px 0 0; padding: 6px 0 0; border: 1px solid #dcdcdc; }
legend { margin-left: 6px; padding: 0 2px; }
.fee { display: flex; align-items: center; justify-content: flex-end; gap: 8px; height: 26px; padding-right: 45px; }

.parts-box { height: 185px; border: 1px solid #aaa; background: #fff; }
.parts { table-layout: fixed; width: 235px; border-collapse: collapse; color: #333; }
.parts th { height: 19px; padding: 0 0 0 3px; border: 1px solid var(--line); background: #f0f0f0; text-align: left; font-weight: 400; line-height: 16px; }
.parts td { height: 23px; padding: 0 4px 0 1px; border: 1px solid var(--line); line-height: 16px; }
.parts .rownum { position: relative; background: #f0f0f0; vertical-align: top; }
.parts .rownum b { border-left-color: #fff; }
.parts .even, .parts .selected { color: #000; }
.parts .even { background: #e8efe8; }
.parts .selected, .parts .selected .rownum { background: var(--selected); }
.canvas { flex: 1; border: solid #666; border-width: 2px 0 0 2px; background: #fff; }
.dim-text { font-family: "Liberation Sans", sans-serif; font-size: 10px; }
```
